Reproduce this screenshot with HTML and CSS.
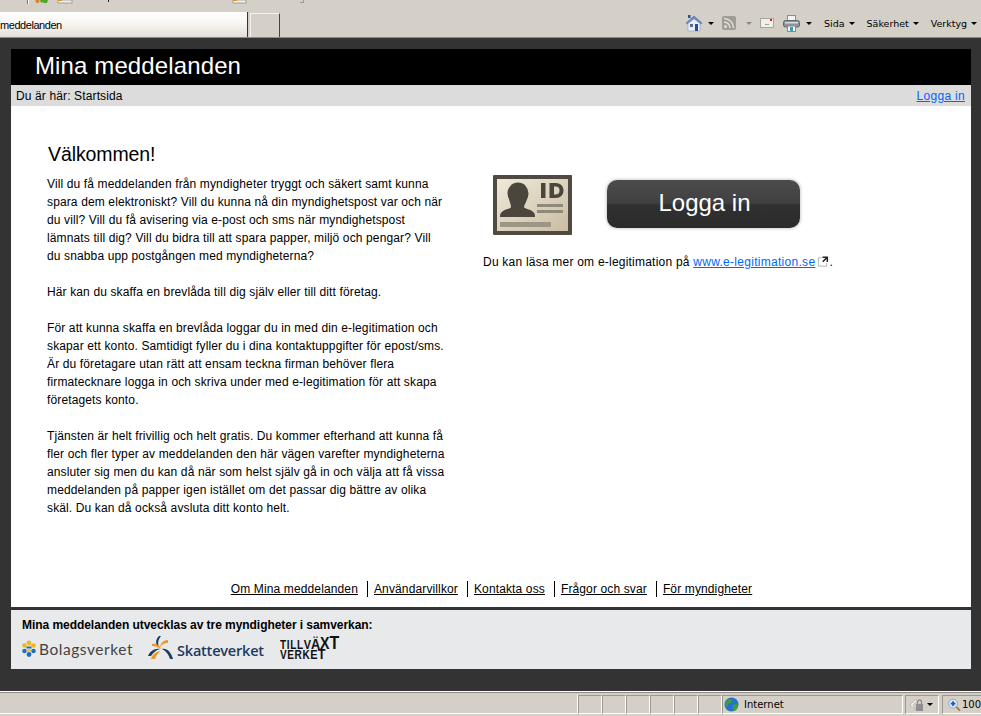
FILE: index.html
```html
<!DOCTYPE html>
<html lang="sv">
<head>
<meta charset="utf-8">
<title>Mina meddelanden</title>
<link rel="stylesheet" href="styles.css">
</head>
<body>
<div class="chrome">
  <div class="chrome-top">
    <svg class="mini" width="310" height="5" viewBox="0 0 310 5"><rect x="27" y="0" width="1" height="4" fill="#777"/><rect x="28" y="0" width="1" height="4" fill="#fff"/><path d="M40 0h8l-1 3h-3l-2-1-1 1z" fill="#4fa82a"/><circle cx="37.500" cy="1" r="2" fill="#d9841f"/><rect x="58" y="0" width="14" height="3" fill="#f3efe4" stroke="#8a8a8a" stroke-width=".7"/><rect x="58" y="0" width="4" height="1" fill="#e8912a"/><rect x="108" y="0" width="1" height="2" fill="#222"/><rect x="233" y="0" width="13" height="3" fill="#f3efe4" stroke="#8a8a8a" stroke-width=".7"/><rect x="233" y="0" width="4" height="1" fill="#e8912a"/><path d="M300 2h3V0h1v3h-4z" fill="#999"/></svg>
  </div>
  <div class="chrome-row">
    <div class="tab"><span class="tab-label">meddelanden</span></div>
    <div class="newtab"></div>
    <div class="tools">
      <svg class="home" width="18" height="18" viewBox="0 0 18 18"><path d="M1 9 9 2l8 7-1.500 1L9 4.500 2.500 10z" fill="#6b8fc0" stroke="#3b5f9a" stroke-width=".5"/><path d="M3 9.500 9 5l6 4.500V17H3z" fill="#e9eef5" stroke="#8aa0c0" stroke-width=".6"/><rect x="10" y="10" width="3" height="7" fill="#1f4f9f"/><rect x="5" y="10" width="3" height="3" fill="#5a6a80"/><rect x="3" y="1" width="2.500" height="3" fill="#2a4fa0"/></svg>
      <i class="caret first"></i>
      <svg class="rss" width="14" height="14" viewBox="0 0 14 14"><rect width="14" height="14" rx="2" fill="#a09d96"/><circle cx="3.500" cy="10.500" r="1.500" fill="#dedbd4"/><path d="M2 6a6 6 0 0 1 6 6M2 2.500A9.500 9.500 0 0 1 11.500 12" fill="none" stroke="#dedbd4" stroke-width="1.600"/></svg>
      <i class="caret grey"></i>
      <svg class="mail" width="14" height="10" viewBox="0 0 14 10"><rect x=".5" y=".5" width="13" height="9" fill="#f1efea" stroke="#aaa69e"/><rect x="10" y="1" width="2" height="2" fill="#e02020"/><rect x="5" y="6" width="4" height="1" fill="#a5a29b"/></svg>
      <svg class="printer" width="17" height="17" viewBox="0 0 17 17"><rect x="4.500" y=".5" width="8" height="6" fill="#f4f4f4" stroke="#8c8c8c"/><rect x=".5" y="5.500" width="16" height="6.500" rx="2" fill="#8d949b" stroke="#5f666d"/><rect x="2" y="7" width="13" height="1.500" fill="#d6dadd"/><rect x="4.500" y="11" width="8" height="5.500" fill="#f4f4f4" stroke="#8c8c8c"/><rect x="7" y="12" width="3" height="4" fill="#3a9ac0"/></svg>
      <i class="caret"></i>
      <span class="menu">Sida</span><i class="caret near"></i>
      <span class="menu">Säkerhet</span><i class="caret near"></i>
      <span class="menu">Verktyg</span><i class="caret near"></i>
    </div>
  </div>
</div>

<div class="stage">
  <div class="site">
    <header class="masthead">Mina meddelanden</header>
    <nav class="crumbs">
      <span>Du är här: Startsida</span>
      <a href="#">Logga in</a>
    </nav>
    <main class="content">
      <section class="intro">
        <h1>Välkommen!</h1>
        <p>Vill du få meddelanden från myndigheter tryggt och säkert samt kunna<br>spara dem elektroniskt? Vill du kunna nå din myndighetspost var och när<br>du vill? Vill du få avisering via e-post och sms när myndighetspost<br>lämnats till dig? Vill du bidra till att spara papper, miljö och pengar? Vill<br>du snabba upp postgången med myndigheterna?</p>
        <p>Här kan du skaffa en brevlåda till dig själv eller till ditt företag.</p>
        <p>För att kunna skaffa en brevlåda loggar du in med din e-legitimation och<br>skapar ett konto. Samtidigt fyller du i dina kontaktuppgifter för epost/sms.<br>Är du företagare utan rätt att ensam teckna firman behöver flera<br>firmatecknare logga in och skriva under med e-legitimation för att skapa<br>företagets konto.</p>
        <p>Tjänsten är helt frivillig och helt gratis. Du kommer efterhand att kunna få<br>fler och fler typer av meddelanden den här vägen varefter myndigheterna<br>ansluter sig men du kan då när som helst själv gå in och välja att få vissa<br>meddelanden på papper igen istället om det passar dig bättre av olika<br>skäl. Du kan då också avsluta ditt konto helt.</p>
      </section>
      <section class="login">
        <div class="login-row">
          <svg class="idcard" width="79" height="60" viewBox="0 0 79 60">
            <defs><linearGradient id="card" x1="0" y1="0" x2="1" y2="1"><stop offset="0" stop-color="#f0e9da"/><stop offset="1" stop-color="#c9bda2"/></linearGradient></defs>
            <rect width="79" height="60" rx="1" fill="#4f4b43"/>
            <rect x="4" y="4" width="71" height="52" fill="url(#card)"/>
            <ellipse cx="25" cy="18.500" rx="10.500" ry="11" fill="#4a463e"/>
            <path d="M16 24c1 4 2 6 2 8-1 2-5 2-8 4-3 2-3 4-3 6h35c0-2 0-4-3-6-3-2-7-2-8-4 0-2 2-4 3-8z" fill="#4a463e"/>
            <rect x="48" y="8" width="4.500" height="15" fill="#4a463e"/>
            <path d="M56.500 8h6c5 0 8 3 8 7.500S67.500 23 62.500 23h-6zm4.500 3.500v8h1.500c3 0 4-1.500 4-4s-1-4-4-4z" fill="#4a463e" fill-rule="evenodd"/>
            <rect x="44" y="29" width="26" height="3" fill="#8f897b"/>
            <rect x="44" y="35" width="26" height="3" fill="#8f897b"/>
            <rect x="7" y="47" width="51" height="5" fill="#9c9687"/>
          </svg>
          <a class="btn" href="#">Logga in</a>
        </div>
        <p class="more">Du kan läsa mer om e-legitimation på <a href="#">www.e-legitimation.se</a><svg class="ext" width="12" height="13" viewBox="0 0 13 13"><path d="M7.500 2.500h-6v9h9v-6" fill="none" stroke="#b0b0b0"/><rect x="5" y="0" width="8" height="8" fill="#fff"/><path d="M6 1h6v6h-1.600V3.800L6.800 7.400 5.600 6.200l3.600-3.600H6z" fill="#222"/></svg>.</p>
      </section>
      <ul class="links">
        <li><a href="#">Om Mina meddelanden</a></li>
        <li><a href="#">Användarvillkor</a></li>
        <li><a href="#">Kontakta oss</a></li>
        <li><a href="#">Frågor och svar</a></li>
        <li><a href="#">För myndigheter</a></li>
      </ul>
    </main>
    <footer class="partners">
      <strong>Mina meddelanden utvecklas av tre myndigheter i samverkan:</strong>
      <div class="logos">
        <div class="bv">
          <svg width="14" height="18" viewBox="0 0 14 18"><circle cx="7" cy="3" r="2.400" fill="#f2b51c"/><circle cx="2.500" cy="5.500" r="2.300" fill="#f2b51c"/><circle cx="11.500" cy="5.500" r="2.300" fill="#f2b51c"/><circle cx="2.500" cy="11" r="2.300" fill="#1f6fc0"/><circle cx="11.500" cy="11" r="2.300" fill="#1f6fc0"/><circle cx="7" cy="14.500" r="2.400" fill="#1f6fc0"/><rect x="4.500" y="6.500" width="5" height="2" fill="#1f6fc0"/><rect x="4.500" y="9.500" width="5" height="2" fill="#f2b51c"/></svg>
          <span>Bolagsverket</span>
        </div>
        <div class="sk">
          <svg width="25" height="24" viewBox="0 0 25 24"><path d="M13 0c-3 4-4 8-1 12-5-3-5-8-1-12z" fill="#1d3a5f"/><path d="M20 4c-4 0-8 3-8 8 1-3 4-5 8-5z" fill="#f0962a"/><path d="M4 8c3-1 7 0 9 5-3-2-6-3-9-3z" fill="#f0962a"/><path d="M0 20c2-5 7-8 12-7-4 1-7 4-9 7z" fill="#1d3a5f"/><path d="M3 23c1-4 4-7 9-8-2 2-4 5-5 8z" fill="#f0962a"/><path d="M14 13c5-1 9 3 11 10h-3c-1-4-4-8-8-10z" fill="#1d3a5f"/></svg>
          <span>Skatteverket</span>
        </div>
        <div class="tv">
          <div class="tv-line tv-top"><span class="s1">TILL</span><span class="s2">V</span><span class="s3">Ä</span><span class="s4">X</span><span class="s5">T</span></div>
          <div class="tv-line tv-bottom"><span class="s1">VERK</span><span class="s2">E</span><span class="s3">T</span></div>
        </div>
      </div>
    </footer>
  </div>
</div>

<div class="status">
  <div class="cell w-a"></div><div class="cell"></div><div class="cell"></div><div class="cell"></div><div class="cell"></div><div class="cell"></div><div class="cell"></div>
  <div class="cell zone">
    <svg width="15" height="15" viewBox="0 0 15 15"><circle cx="7.500" cy="7.500" r="7" fill="#2a72c8"/><path d="M3 3c2-1 4-1 5 0l-1 3-3 1-1 3-2-2c0-2 1-4 2-5zM9 8l4-1 1 3-3 4-2-1z" fill="#3fa03a"/></svg>
    <span>Internet</span>
  </div>
  <div class="cell sec">
    <svg width="15" height="14" viewBox="0 0 15 14"><path d="M1 7 7 1l1 2-4 4 3 5z" fill="#f2f0ea" stroke="#999" stroke-width=".5"/><rect x="7" y="6" width="7" height="7" fill="#8e8e8e"/><path d="M8.500 6V4a2 2 0 0 1 4 0v2" fill="none" stroke="#8e8e8e" stroke-width="1.300"/></svg>
    <i class="caret"></i>
  </div>
  <div class="cell zoom">
    <svg width="14" height="14" viewBox="0 0 14 14"><circle cx="5.500" cy="5.500" r="4.800" fill="#dcebfa" stroke="#7fa6cc"/><path d="M3 5.500h5M5.500 3v5" stroke="#1c52c0" stroke-width="1.800"/><path d="m9 9 4 4" stroke="#a87a3a" stroke-width="2"/></svg>
    <span>100</span>
  </div>
</div>
</body>
</html>
```

FILE: styles.css
```css
* { box-sizing: border-box; }
html, body { margin: 0; padding: 0; height: 716px; overflow: hidden; }
body {
  width: 981px;
  background: #d4d0c8;
  font-family: "Liberation Sans", Arial, sans-serif;
  font-size: 12px;
  letter-spacing: .13px;
  color: #000;
  display: flex;
  flex-direction: column;
}
.chrome { height: 38px; background: #d4d0c8; flex: none; border-bottom: 1px solid #8c8a85; }
.chrome-top { height: 12px; }
.mini { display: block; }
.chrome-row { display: flex; height: 25px; align-items: stretch; }
.tab {
  width: 248px;
  background: linear-gradient(#fff 0%, #f7f6f3 45%, #e2dfd8 100%);
  border-right: 1px solid #333;
  overflow: hidden;
  display: flex;
  align-items: center;
  font-size: 11px;
  letter-spacing: -.45px;
}
.tab-label { display: block; }
.newtab { width: 30px; margin-left: 2px; margin-top: 1px; border: 1px solid #f4f2ee; border-right: 1px solid #444; border-bottom: 0; }
.tools { margin-left: auto; display: flex; align-items: center; width: 297px; font-family: "DejaVu Sans", sans-serif; font-size: 9.5px; letter-spacing: 0; margin-top: -3px; }
.home { margin-left: 1px; }
.caret { display: block; width: 0; height: 0; border: 3px solid transparent; border-top: 3px solid #000; border-bottom: 0; margin-left: 6px; flex: none; }
.caret.grey { border-top-color: #8a8a8a; margin-left: 10px; }
.caret.first { margin-left: 5px; margin-right: 8px; }
.caret.near { margin-left: 4px; }
.mail { margin-left: 8px; }
.printer { margin-left: 9px; }
.menu { margin-left: 12px; white-space: nowrap; }

.stage { flex: 1; background: #333; padding: 11px 10px 0 11px; min-height: 0; height: 653px; }
.site { width: 960px; }
.masthead {
  height: 36px;
  background: #000;
  color: #fff;
  font-size: 24px;
  line-height: 34px;
  padding-left: 24px;
  letter-spacing: .12px;
}
.crumbs {
  height: 21px;
  background: #dcdcdc;
  display: flex;
  justify-content: space-between;
  align-items: center;
  padding: 0 6px 0 5px;
}
.crumbs a, .more a { color: #0066ff; text-decoration: underline; }
.crumbs a { letter-spacing: .3px; }
.content {
  height: 501px;
  background: #fff;
  display: grid;
  grid-template-columns: 436px 1fr;
  grid-template-rows: 1fr auto;
  padding-left: 36px;
}
.intro { padding-top: 36px; }
.intro h1 { margin: 0 0 9px 1px; font-size: 19.5px; font-weight: normal; line-height: 24px; letter-spacing: -.1px; }
.intro p { margin: 0 0 18px; line-height: 18px; font-size: 12px; white-space: nowrap; }
.login { padding-top: 69px; }
.login-row { display: flex; align-items: flex-start; padding-left: 10px; }
.idcard { display: block; flex: none; }
.btn {
  margin-left: 35px;
  margin-top: 5px;
  padding-left: 2px;
  width: 193px;
  height: 48px;
  border-radius: 10px;
  background: linear-gradient(#4c4c4c 0%, #404040 48%, #303030 52%, #2b2b2b 100%);
  box-shadow: 0 0 3px 1px #d0d0d0;
  color: #fff;
  font-size: 24px;
  letter-spacing: 0;
  line-height: 46px;
  text-align: center;
  text-decoration: none;
}
.more { margin: 19px 0 0; line-height: 16px; font-size: 12px; white-space: nowrap; letter-spacing: .22px; }
.more a { letter-spacing: .29px; }
.ext { margin: 0 0 0 2px; vertical-align: -2px; }
.links {
  grid-column: 1 / -1;
  margin: 0 0 10px -36px;
  padding: 0;
  list-style: none;
  display: flex;
  justify-content: center;
  height: 16px;
  letter-spacing: .13px;
  transform: translateX(5px);
}
.links li { padding: 0 9px 0 6px; border-left: 1px solid #000; line-height: 16px; white-space: nowrap; }
.links li:first-child { border-left: 0; padding-left: 0; }
.links a { color: #000; text-decoration: underline; }

.partners {
  margin-top: 3px;
  height: 59px;
  background: #e8e9eb;
  padding: 8px 11px 0;
}
.partners strong { display: block; font-size: 12px; line-height: 14px; letter-spacing: -.05px; }
.logos { display: flex; align-items: flex-start; margin-top: 3px; }
.bv { display: flex; align-items: center; margin-top: 5px; width: 126px; }
.bv span { font-family: "Lato", sans-serif; font-size: 15.500px; line-height: 16px; color: #444; margin-left: 3px; letter-spacing: .55px; }
.sk { display: flex; align-items: flex-end; width: 132px; margin-top: 1px; }
.sk span { font-family: "Open Sans", sans-serif; font-weight: 600; font-size: 14.500px; color: #1d3a5f; line-height: 18px; margin-left: 4px; letter-spacing: -.2px; }
.tv { width: 66px; height: 26px; margin-top: -1px; font-family: "Liberation Sans", sans-serif; font-weight: bold; color: #111; letter-spacing: 0; transform: scaleX(.84); transform-origin: left top; }
.tv-line { height: 10px; line-height: 10px; white-space: nowrap; }
.tv-top { margin-top: 4px; }
.tv-bottom { margin-top: 1px; }
.s1 { font-size: 12px; letter-spacing: .7px; }
.s2 { font-size: 13px; }
.s3 { font-size: 15px; }
.s4 { font-size: 17px; }
.s5 { font-size: 19px; }

.status {
  flex: none;
  height: 25px;
  display: flex;
  align-items: stretch;
  background: #d4d0c8;
  border-top: 1px solid #fff;
  box-shadow: inset 0 1px 0 #8c8a85;
  padding: 3px 0 2px;
  font-family: "DejaVu Sans", sans-serif;
  font-size: 10px;
  letter-spacing: 0;
  overflow: hidden;
}
.cell { width: 24px; border: 1px solid; border-color: #9a978f #fff #fff #9a978f; flex: none; display: flex; align-items: center; }
.w-a { width: 578px; border-left: 0; border-top: 0; }
.zone { width: 181px; gap: 5px; padding-left: 1px; }
.sec { width: 34px; margin-left: 2px; padding-left: 3px; }
.sec .caret { margin-left: 3px; }
.zoom { width: 39px; margin-left: 3px; padding-left: 5px; gap: 1px; border-right: 0; }
```
